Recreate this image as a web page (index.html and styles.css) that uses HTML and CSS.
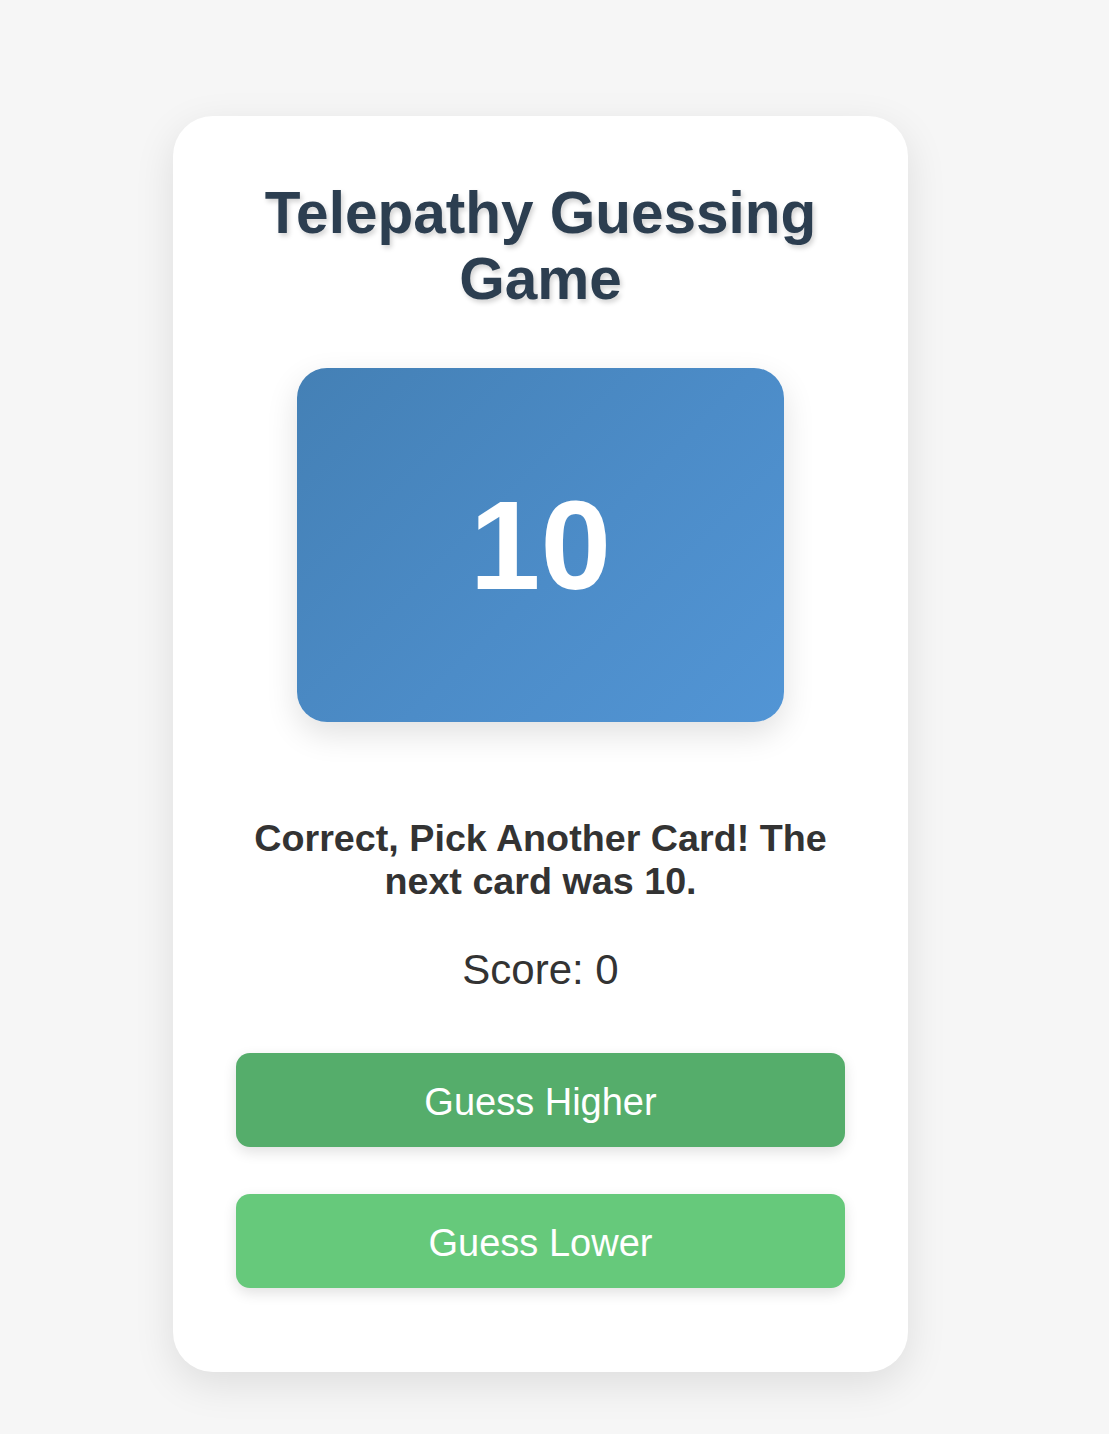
FILE: index.html
```html
<!DOCTYPE html>
<html lang="en">
<head>
<meta charset="utf-8">
<title>Telepathy Guessing Game</title>
<link rel="stylesheet" href="styles.css">
</head>
<body>
<main class="game">
  <h1 class="title">Telepathy Guessing Game</h1>
  <div class="card-face"><span class="card-number">10</span></div>
  <p class="message">Correct, Pick Another Card! The next card was 10.</p>
  <p class="score">Score: 0</p>
  <div class="actions">
    <button class="btn btn-higher">Guess Higher</button>
    <button class="btn btn-lower">Guess Lower</button>
  </div>
</main>
</body>
</html>
```

FILE: styles.css
```css
html, body {
  margin: 0;
  padding: 0;
}

body {
  background: #f6f6f6;
  font-family: "Liberation Sans", Arial, Helvetica, sans-serif;
  display: flex;
  justify-content: center;
  align-items: flex-start;
  padding: 116px 28px 62px 0;
  min-height: 1434px;
  box-sizing: border-box;
}

.game {
  width: 735px;
  box-sizing: border-box;
  background: #ffffff;
  border-radius: 40px;
  padding: 64px 63px 84px;
  box-shadow: 0 12px 40px rgba(0, 0, 0, 0.10);
  display: flex;
  flex-direction: column;
  align-items: center;
  text-align: center;
}

.title {
  margin: 0;
  font-size: 58.5px;
  line-height: 66px;
  font-weight: 700;
  color: #2c3e50;
  text-shadow: 2px 3px 5px rgba(0, 0, 0, 0.18);
}

.card-face {
  margin-top: 56px;
  width: 487px;
  height: 354px;
  border-radius: 30px;
  background: linear-gradient(135deg, #4480b5 0%, #4c8cc8 55%, #5295d5 100%);
  box-shadow: 0 12px 32px rgba(0, 0, 0, 0.12);
  display: flex;
  align-items: center;
  justify-content: center;
}

.card-number {
  color: #ffffff;
  font-size: 127px;
  font-weight: 700;
  line-height: 1;
}

.message {
  margin: 95px 0 0;
  font-size: 37.7px;
  line-height: 43px;
  font-weight: 700;
  color: #333333;
  max-width: 600px;
}

.score {
  margin: 43px 0 0;
  font-size: 42px;
  line-height: 48px;
  color: #333333;
}

.actions {
  margin-top: 59px;
  width: 100%;
  display: flex;
  flex-direction: column;
  gap: 47px;
}

.btn {
  width: 100%;
  height: 94px;
  border: none;
  border-radius: 14px;
  color: #ffffff;
  font-family: "Liberation Sans", Arial, Helvetica, sans-serif;
  font-size: 38px;
  padding: 4px 0 0;
  box-shadow: 0 5px 14px rgba(0, 0, 0, 0.12);
  cursor: pointer;
}

.btn-higher {
  background: #55ad6b;
}

.btn-lower {
  background: #66c97b;
}
```
